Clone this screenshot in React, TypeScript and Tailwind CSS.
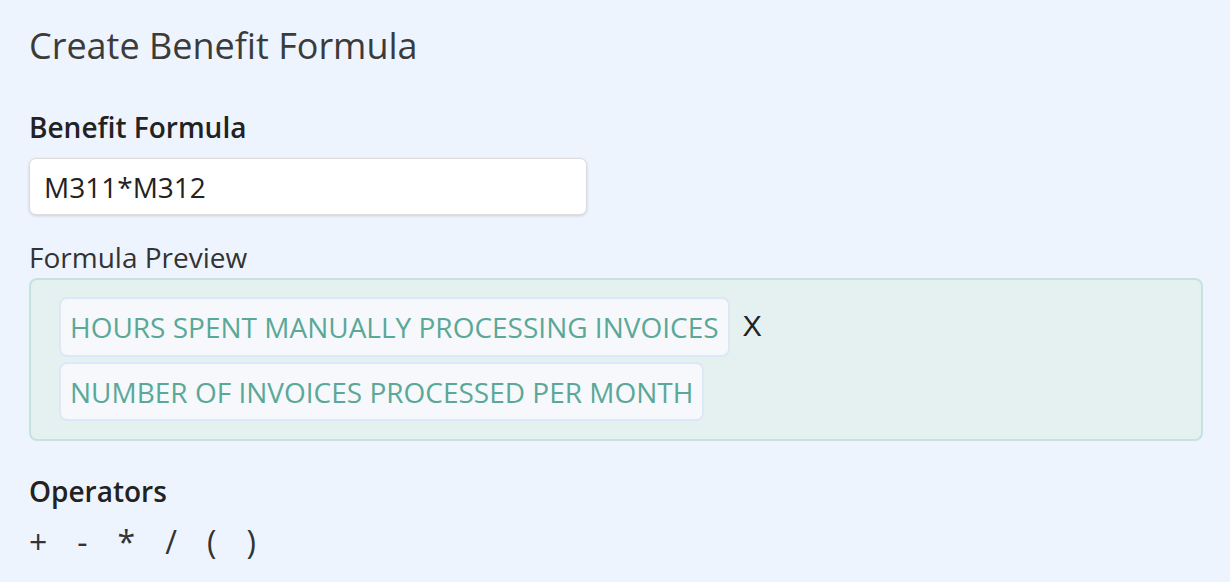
import React from "react";

export default function App() {
  const font = { fontFamily: '"Open Sans", "Noto Sans", sans-serif' };
  return (
    <div className="w-[1230px] h-[582px] bg-[#eef4fe] overflow-hidden pl-[29px] pr-[27px]" style={font}>
      <h1 className="pt-[24px] text-[36px] leading-[44px] text-[#3b3b3b] font-normal">Create Benefit Formula</h1>
      <div className="mt-[42px] text-[28px] leading-[34px] font-semibold text-[#222]">Benefit Formula</div>
      <div className="mt-[14px] w-[558px] h-[57px] bg-white rounded-[7px] border border-[#dcdcdc] shadow-[0_1px_3px_rgba(0,0,0,0.15)] flex items-center px-[14px] text-[28px] text-[#222]">
        M311*M312
      </div>
      <div className="mt-[25px] text-[28px] leading-[34px] text-[#333]">Formula Preview</div>
      <div className="mt-[4px] h-[163px] bg-[#e4f1f0] border-2 border-[#c6e2de] rounded-[8px] pl-[28px] pt-[17px] flex flex-col gap-[5px]">
        <div className="flex items-center gap-[13px]">
          <span className="h-[60px] flex items-center px-[9px] bg-[#f7f8fc] border-2 border-[#dbe8f8] rounded-[8px] text-[28px] text-[#5aa898]">
            HOURS SPENT MANUALLY PROCESSING INVOICES
          </span>
          <span className="text-[29px] text-[#222]" style={{ fontFamily: '"Liberation Sans", Arial, sans-serif' }}>X</span>
        </div>
        <div className="flex">
          <span className="h-[59px] flex items-center px-[9px] bg-[#f7f8fc] border-2 border-[#dbe8f8] rounded-[8px] text-[28px] text-[#5aa898]">
            NUMBER OF INVOICES PROCESSED PER MONTH
          </span>
        </div>
      </div>
      <div className="mt-[33px] text-[28px] leading-[34px] font-semibold text-[#222]">Operators</div>
      <div className="mt-[14px] flex gap-[30px] text-[32px] leading-[40px] text-[#333]">
        <span>+</span>
        <span>-</span>
        <span>*</span>
        <span>/</span>
        <span>(</span>
        <span>)</span>
      </div>
    </div>
  );
}
